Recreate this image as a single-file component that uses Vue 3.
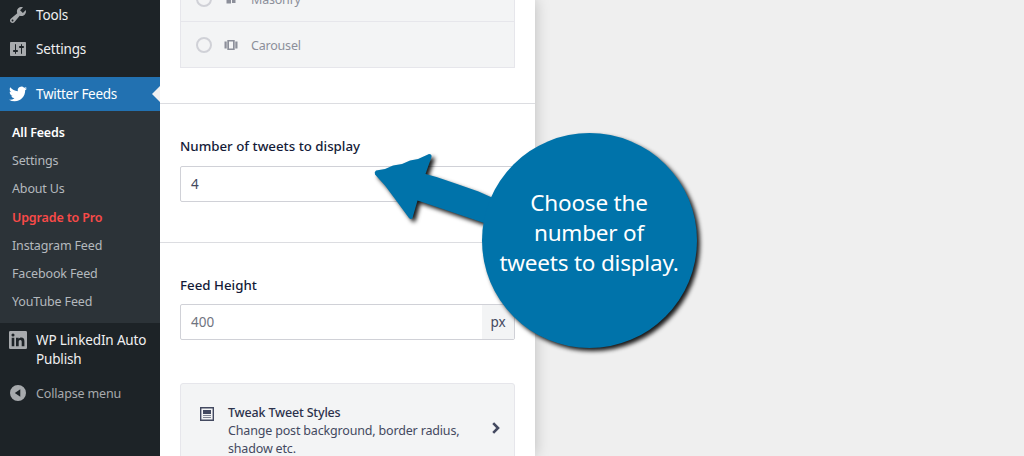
<template>
  <div class="screen">
    <nav class="sidebar">
      <a class="menu-item">
        <svg class="menu-icon" viewBox="0 0 20 20"><path d="M16.680 9.770c-1.340 1.340-3.300 1.670-4.950.990l-5.410 6.520c-.990.990-2.590.990-3.580 0s-.990-2.590 0-3.570l6.520-5.420c-.680-1.650-.350-3.610.990-4.950 1.280-1.280 3.120-1.620 4.720-1.060l-2.890 2.890 2.820 2.820 2.860-2.870c.530 1.580.180 3.390-1.080 4.650zM3.810 16.210c.4.390 1.040.390 1.430 0 .4-.4.4-1.040 0-1.430-.390-.4-1.030-.4-1.430 0-.390.390-.390 1.030 0 1.430z" /></svg>
        <span>Tools</span>
      </a>
      <a class="menu-item">
        <svg class="menu-icon" viewBox="0 0 20 20"><path d="M18 16V4c0-.55-.45-1-1-1H3c-.55 0-1 .45-1 1v12c0 .55.45 1 1 1h14c.55 0 1-.45 1-1zM8 11h1c.55 0 1 .45 1 1s-.45 1-1 1H8v1.500c0 .28-.22.5-.5.5s-.5-.22-.5-.5V13H6c-.55 0-1-.45-1-1s.45-1 1-1h1V5.500c0-.28.22-.5.5-.5s.5.22.5.5V11zm5-2h-1c-.55 0-1-.45-1-1s.45-1 1-1h1V5.500c0-.28.22-.5.5-.5s.5.22.5.5V7h1c.55 0 1 .45 1 1s-.45 1-1 1h-1v5.500c0 .28-.22.5-.5.5s-.5-.22-.5-.5V9z" /></svg>
        <span>Settings</span>
      </a>
      <div class="menu-separator"></div>
      <a class="menu-item active">
        <svg class="menu-icon" viewBox="0 0 24 24"><path d="M23.950 4.570a10 10 0 0 1-2.820.770 4.960 4.960 0 0 0 2.160-2.720c-.950.550-2 .950-3.130 1.180a4.920 4.920 0 0 0-8.380 4.480C7.690 8.090 4.070 6.130 1.640 3.160a4.820 4.820 0 0 0-.670 2.480c0 1.710.870 3.210 2.190 4.100a4.900 4.900 0 0 1-2.230-.620v.060a4.920 4.920 0 0 0 3.950 4.830 5 5 0 0 1-2.210.080 4.940 4.940 0 0 0 4.600 3.420A9.870 9.870 0 0 1 0 19.540a14 14 0 0 0 7.550 2.210c9.050 0 14-7.500 14-13.980 0-.210 0-.420-.020-.630a9.940 9.940 0 0 0 2.420-2.570z" /></svg>
        <span>Twitter Feeds</span>
      </a>
      <ul class="submenu">
        <li v-for="item in submenu" :key="item.name" :class="item.type">{{ item.name }}</li>
      </ul>
      <a class="menu-item linkedin">
        <svg class="menu-icon" viewBox="0 0 18 18"><path fill-rule="evenodd" d="M1.300 0h15.400A1.300 1.300 0 0 1 18 1.300v15.400a1.300 1.300 0 0 1-1.300 1.300H1.300A1.300 1.300 0 0 1 0 16.700V1.300A1.300 1.300 0 0 1 1.300 0zM2.700 6.800v8.500h2.600V6.800zM4 2.500a1.550 1.550 0 1 0 0 3.100 1.550 1.550 0 0 0 0-3.100zM7 6.800v8.500h2.700v-4.200c0-1.300.4-2.200 1.600-2.200s1.400 1 1.400 2.200v4.200h2.700v-4.700c0-2.500-.8-4-3.100-4-1.300 0-2.100.6-2.600 1.400V6.800z" /></svg>
        <span>WP LinkedIn Auto<br />Publish</span>
      </a>
      <a class="menu-item collapse">
        <svg class="menu-icon" viewBox="0 0 20 20"><path fill-rule="evenodd" d="M10 2a8 8 0 1 0 0 16 8 8 0 0 0 0-16zM12.300 6.200v7.600L6.800 10z" /></svg>
        <span>Collapse menu</span>
      </a>
    </nav>

    <main class="panel">
      <section class="layouts">
        <div class="layout-list">
          <div class="layout-option">
            <i class="radio"></i>
            <svg class="layout-icon" viewBox="0 0 14 14"><path d="M2.500 1h4.500v10.500H2.500zM8 1h3.500v5H8zM8 7h3.500v4H8z" /></svg>
            <span>Masonry</span>
          </div>
          <div class="layout-option">
            <i class="radio"></i>
            <svg class="layout-icon" viewBox="0 0 14 14"><path fill-rule="evenodd" d="M3.300 2h7.400v10H3.300zM5 3.600v6.800h4V3.600zM.5 3.500h2.200v7H.5zM11.300 3.500h2.200v7h-2.200z" /></svg>
            <span>Carousel</span>
          </div>
        </div>
      </section>

      <section class="field number">
        <label>Number of tweets to display</label>
        <div class="input">4</div>
      </section>

      <section class="field height">
        <label>Feed Height</label>
        <div class="input grey">
          <span>400</span>
          <span class="suffix">px</span>
        </div>
      </section>

      <section class="tweak-card">
        <svg class="card-icon" viewBox="0 0 14 14"><path fill-rule="evenodd" d="M0 0h14v14H0zM1.400 1.400v11.200h11.200V1.400z" /><path d="M3 3h8v4H3z" /><path class="faint" d="M3 8h8v1H3zM3 10h8v1H3z" /></svg>
        <div class="card-text">
          <strong>Tweak Tweet Styles</strong>
          <p>Change post background, border radius,<br />shadow etc.</p>
        </div>
        <svg class="chevron" viewBox="0 0 8 12"><path d="M1.200 1.200 6 6l-4.800 4.800" /></svg>
      </section>
    </main>

    <!-- Callout drawn over the page -->
    <div class="callout">
      <svg class="callout-shape" viewBox="0 0 350 240">
        <path d="M11 50.500 20 49l8-3.500 9-1.500 8-3.500 8-1.500 11-5q3 0 2.500 3L60.500 54l11 3 22 7.500 20 7 14.500 6.500 7 0v30l-16-5-66.500-22.500L47.500 98q-1.500 2-3.500 0L33 83 20 65.500 10 54.500q-1-2.500 1-4z" />
        <circle cx="224.500" cy="120.500" r="107.500" />
      </svg>
      <p class="callout-text">Choose the<br />number of<br />tweets to display.</p>
    </div>
  </div>
</template>

<script setup>
const submenu = [
  { name: 'All Feeds', type: 'current' },
  { name: 'Settings', type: '' },
  { name: 'About Us', type: '' },
  { name: 'Upgrade to Pro', type: 'upgrade' },
  { name: 'Instagram Feed', type: '' },
  { name: 'Facebook Feed', type: '' },
  { name: 'YouTube Feed', type: '' }
]
</script>

<style>
body {
  background: #efefef;
  overflow: hidden;
}
</style>

<style scoped>
.screen {
  position: relative;
  display: flex;
  width: 1024px;
  height: 456px;
  overflow: hidden;
  background: #efefef;
  font-family: "Noto Sans", "Open Sans", sans-serif;
  font-size: 13px;
}

.sidebar {
  width: 160px;
  flex-shrink: 0;
  background: #1d2327;
  z-index: 1;
}

.sidebar .menu-item:first-child {
  margin-top: -2px;
}

.menu-item {
  position: relative;
  display: flex;
  align-items: center;
  height: 34px;
  padding-left: 8px;
  gap: 8px;
  color: #f0f0f1;
  font-size: 13.5px;
  letter-spacing: -0.15px;
  line-height: 19px;
  white-space: nowrap;
}

.menu-icon {
  width: 20px;
  height: 20px;
  fill: #a7aaad;
  flex-shrink: 0;
}

.menu-separator {
  height: 11px;
}

.active {
  background: #2271b1;
  color: #fff;
  letter-spacing: -0.3px;
}

.active .menu-icon {
  width: 18px;
  height: 18px;
  margin: 0 1px;
  fill: #fff;
}

.active::after {
  content: "";
  position: absolute;
  right: 0;
  top: 9px;
  border: 8px solid transparent;
  border-left: 0;
  border-right-color: #f0f0f1;
}

.submenu {
  margin: 0;
  padding: 8px 0 0;
  height: 204px;
  list-style: none;
  background: #2c3338;
  color: #b4b9be;
  font-size: 12.5px;
  letter-spacing: -0.15px;
}

.submenu li {
  height: 28px;
  padding-left: 12px;
  line-height: 28px;
  white-space: nowrap;
}

.submenu .current {
  color: #fff;
  font-weight: 600;
}

.submenu .upgrade {
  height: 29px;
  line-height: 30px;
  color: #f94a48;
  font-weight: 600;
}

.linkedin {
  height: 54px;
  align-items: flex-start;
  padding-top: 8px;
  box-sizing: border-box;
}

.linkedin .menu-icon {
  width: 18px;
  height: 18px;
  margin: 0 1px;
}

.collapse {
  height: 32px;
  color: #a7aaad;
  font-size: 12.5px;
}

.panel {
  width: 375px;
  box-sizing: border-box;
  flex-shrink: 0;
  background: #fff;
  color: #434960;
  box-shadow: 0 0 14px rgba(0, 0, 0, 0.22);
}

.layouts {
  height: 103px;
  padding: 0 20px;
  border-bottom: 1px solid #dcdde1;
}

.layout-list {
  height: 67px;
  border: 1px solid #e6e6eb;
  border-top: 0;
  background: #f3f4f5;
  color: #8c8f9a;
  font-size: 12.5px;
  letter-spacing: -0.2px;
  overflow: hidden;
  display: flex;
  flex-direction: column;
  justify-content: flex-end;
}

.layout-option {
  display: flex;
  align-items: center;
  flex-shrink: 0;
  height: 45px;
  padding-left: 15px;
}

.layout-option span {
  padding-top: 2px;
}

.layout-option + .layout-option {
  border-top: 1px solid #e6e6eb;
}

.radio {
  width: 12px;
  height: 12px;
  border: 2px solid #d0d1d7;
  border-radius: 50%;
}

.layout-icon {
  width: 14px;
  height: 14px;
  margin: 0 13px 0 12px;
  fill: #8c8f9a;
}

.field {
  padding: 0 20px;
}

.field label {
  display: block;
  height: 20px;
  line-height: 20px;
  color: #141b38;
  font-weight: 500;
  font-size: 13.3px;
}

.number {
  height: 106px;
  padding-top: 32px;
  border-bottom: 1px solid #dcdde1;
}

.input {
  display: flex;
  height: 34px;
  margin-top: 10px;
  padding-left: 10px;
  border: 1px solid #d0d1d7;
  border-radius: 2px;
  font-size: 13.5px;
  line-height: 35px;
  color: #434960;
}

.grey {
  color: #6f7480;
  line-height: 34px;
}

.height {
  height: 108px;
  padding-top: 32px;
}

.height .input {
  margin-top: 9px;
  justify-content: space-between;
}

.suffix {
  width: 32px;
  text-align: center;
  background: #f3f4f5;
  color: #434960;
}

.tweak-card {
  display: flex;
  height: 100px;
  margin: 0 20px;
  padding: 19px 0 0 19px;
  border: 1px solid #e6e6eb;
  border-radius: 3px;
  background: #f3f4f5;
}

.card-icon {
  width: 14px;
  height: 14px;
  margin-top: 4px;
  fill: #434960;
}

.faint {
  opacity: 0.65;
}

.card-text {
  width: 262px;
  margin: 1px 0 0 14px;
  font-size: 12.5px;
  letter-spacing: -0.17px;
  line-height: 18px;
  white-space: nowrap;
}

.card-text strong {
  display: block;
  font-weight: 500;
  color: #2c324c;
}

.card-text p {
  margin: 0;
}

.chevron {
  width: 8px;
  height: 12px;
  margin: 19px 0 0 2px;
  fill: none;
  stroke: #434960;
  stroke-width: 2.6;
}

.callout {
  position: absolute;
  left: 365px;
  top: 120px;
  width: 350px;
  height: 240px;
  z-index: 2;
}

.callout-shape {
  display: block;
  width: 350px;
  height: 240px;
  overflow: visible;
  fill: #0073aa;
  filter: drop-shadow(3px 3px 2px rgba(0, 0, 0, 0.9));
}

.callout-text {
  position: absolute;
  left: 124px;
  top: 68px;
  width: 200px;
  margin: 0;
  color: #fff;
  font-size: 22.5px;
  letter-spacing: -0.2px;
  line-height: 30px;
  text-align: center;
  white-space: nowrap;
}
</style>
